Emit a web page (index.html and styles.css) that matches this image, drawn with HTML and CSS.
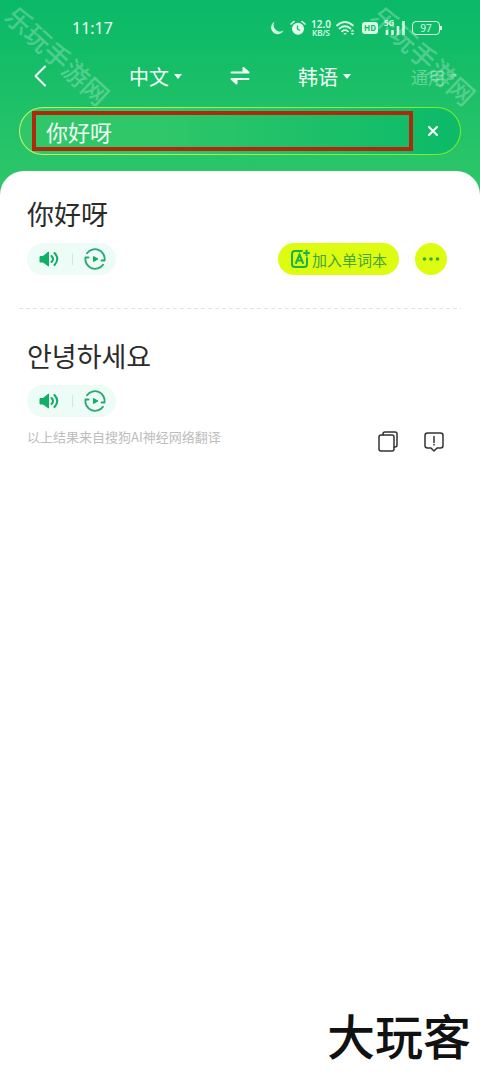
FILE: index.html
```html
<!DOCTYPE html>
<html lang="zh-CN">
<head>
<meta charset="utf-8">
<meta name="viewport" content="width=device-width, initial-scale=1">
<title>翻译</title>
<link rel="stylesheet" href="styles.css">
</head>
<body>
<svg class="defs" width="0" height="0" aria-hidden="true">
  <symbol id="speaker" viewBox="0 0 22 18">
    <path d="M1 6.500h3L9.500 2v14L4 12H1z" fill="#12ad67" stroke="#12ad67" stroke-width="1" stroke-linejoin="round"/>
    <path d="M12.500 6q3 3 0 6M15.500 3q5.500 6 0 12" fill="none" stroke="#12ad67" stroke-width="2" stroke-linecap="round"/>
  </symbol>
  <symbol id="replay" viewBox="0 0 24 24">
    <path d="M4 6.300A9.700 9.700 0 0 1 21.500 13.500H18.500M20 17.700A9.700 9.700 0 0 1 2.500 10.500H5.500" fill="none" stroke="#2aa873" stroke-width="1.900" stroke-linecap="round" stroke-linejoin="round"/>
    <path d="M10.500 9.500v5l4.500-2.500z" fill="#12ad67" stroke="#12ad67" stroke-linejoin="round"/>
  </symbol>
</svg>
<div class="app">
  <header class="top">
    <span class="mark mark-left">乐玩手游网</span>
    <span class="mark mark-right">乐玩手游网</span>
    <div class="status">
      <time>11:17</time>
      <div class="status-icons">
        <svg width="14" height="14" viewBox="0 0 14 14"><path d="M4.500.8A6.600 6.600 0 1 0 13.600 9.500 6.500 6.500 0 0 1 4.500.8z" fill="#d8fbe6"/></svg>
        <svg width="16" height="16" viewBox="0 0 16 16"><circle cx="8" cy="8.700" r="6" fill="#e4fcee"/><path d="M1 4l3-2.500M15 4l-3-2.500" stroke="#e4fcee" stroke-width="1.600" stroke-linecap="round"/><path d="M7.500 5.500v3.500l2.500 1.500" fill="none" stroke="#14b968" stroke-width="1.300"/></svg>
        <span class="speed"><b>12.0</b><b class="unit">KB/S</b></span>
        <svg width="20" height="16" viewBox="0 0 20 16"><path d="M1 5.500q8-7 16 0M3.500 8.500q5.500-4.500 11 0M6 11.300q3-2.300 6 0" fill="none" stroke="#d8fbe6" stroke-width="1.700" stroke-linecap="round"/><path d="M7.200 13h3.600L9 15zM14.500 11.500l2-2 2 2zM14.500 13l2 2 2-2z" fill="#d8fbe6"/></svg>
        <span class="hd">HD</span>
        <span class="signal"><b>5G</b><svg width="22" height="16" viewBox="0 0 22 16"><path d="M3 10v5M8.500 10v5M14 6v9M19.500 1v14" stroke="#d8fbe6" stroke-width="2.500"/></svg></span>
        <span class="battery">97</span>
      </div>
    </div>
    <nav class="langs">
      <button class="back" aria-label="返回"><svg width="14" height="22" viewBox="0 0 14 22"><path d="M12 1.500L2.500 11l9.500 9.500" fill="none" stroke="#fff" stroke-width="2" stroke-linecap="round" stroke-linejoin="round"/></svg></button>
      <button class="lang">中文<i class="caret"></i></button>
      <button class="swap" aria-label="交换语言"><svg width="20" height="18" viewBox="0 0 20 18"><path d="M1.500 5.500h17L13.500 1v4M18.500 12h-17l5 4.500V12" fill="#f2fff7" stroke="#f2fff7" stroke-width="2" stroke-linecap="round" stroke-linejoin="round"/></svg></button>
      <button class="lang">韩语<i class="caret"></i></button>
      <button class="domain">通用<i class="caret"></i></button>
    </nav>
    <form class="search">
      <input type="text" value="你好呀" aria-label="翻译内容">
      <button type="button" class="clear" aria-label="清除"><svg width="12" height="12" viewBox="0 0 12 12"><path d="M2 2l8 8M10 2l-8 8" stroke="#fff" stroke-width="2" stroke-linecap="round"/></svg></button>
    </form>
  </header>
  <main class="panel">
    <section class="entry source">
      <h2>你好呀</h2>
      <div class="row">
        <div class="audio">
          <button aria-label="朗读"><svg width="22" height="18"><use href="#speaker"/></svg></button>
          <i class="bar"></i>
          <button aria-label="跟读"><svg width="24" height="24"><use href="#replay"/></svg></button>
        </div>
        <div class="actions">
          <button class="add"><svg width="20" height="20" viewBox="0 0 20 20"><path d="M12 2H5Q2 2 2 5v10q0 3 3 3h9q3 0 3-3V9" fill="none" stroke="#16b44c" stroke-width="2" stroke-linecap="round"/><path d="M6 14l3.500-8.500L13 14M7.500 11.500h4M14 4h5M16.500 1.500v5" fill="none" stroke="#16b44c" stroke-width="2" stroke-linecap="round"/></svg>加入单词本</button>
          <button class="more" aria-label="更多"><svg width="18" height="4" viewBox="0 0 18 4"><circle cx="2.500" cy="2" r="1.800"/><circle cx="9" cy="2" r="1.800"/><circle cx="15.500" cy="2" r="1.800"/></svg></button>
        </div>
      </div>
    </section>
    <hr>
    <section class="entry">
      <h2 lang="ko">안녕하세요</h2>
      <div class="row">
        <div class="audio">
          <button aria-label="朗读"><svg width="22" height="18"><use href="#speaker"/></svg></button>
          <i class="bar"></i>
          <button aria-label="跟读"><svg width="24" height="24"><use href="#replay"/></svg></button>
        </div>
      </div>
      <div class="foot">
        <p>以上结果来自搜狗AI神经网络翻译</p>
        <div class="tools">
          <button aria-label="复制"><svg width="20" height="22" viewBox="0 0 20 22"><path d="M5 4V3q0-2 2-2h10q2 0 2 2v11q0 2-2 2h-1" /><rect x="1" y="4" width="15" height="16" rx="2"/></svg></button>
          <button aria-label="反馈"><svg width="20" height="22" viewBox="0 0 20 22"><path d="M3.500 2h13q2.500 0 2.500 2.500v10q0 2.500-2.500 2.500H13l-3 3-3-3H3.500Q1 17 1 14.500v-10Q1 2 3.500 2zM10 5.500v6M10 13.500v.5"/></svg></button>
        </div>
      </div>
    </section>
    <footer class="brand">大玩客</footer>
  </main>
</div>
</body>
</html>
```
FILE: styles.css
```css
* { box-sizing: border-box; }

body {
  margin: 0;
  font-family: "Noto Sans CJK SC", "Noto Sans", sans-serif;
  color: #2b2b2b;
  background: #fff;
}

button {
  display: flex;
  align-items: center;
  justify-content: center;
  padding: 0;
  border: 0;
  background: none;
  color: inherit;
  font: inherit;
}

svg { display: block; flex: none; }
.defs { position: absolute; }

.app {
  display: flex;
  flex-direction: column;
  min-height: 100vh;
}

.top {
  position: relative;
  overflow: hidden;
  padding: 16px 19px 40px;
  background: linear-gradient(#09b967, #30c769);
  color: #f2fff7;
}

.mark {
  position: absolute;
  top: 41px;
  font-size: 26px;
  line-height: 28px;
  font-weight: 500;
  white-space: nowrap;
  color: rgba(255, 255, 255, 0.26);
  transform: rotate(43deg);
  pointer-events: none;
}
.mark-left { left: -7px; }
.mark-right { right: -9px; }

.status {
  display: flex;
  align-items: center;
  justify-content: space-between;
  height: 24px;
  padding: 0 21px 0 53px;
  font-size: 16px;
  font-family: "Noto Sans", sans-serif;
}

.status-icons {
  display: flex;
  align-items: center;
  gap: 6px;
  color: #d8fbe6;
}

.speed {
  display: flex;
  flex-direction: column;
  align-items: center;
  width: 22px;
  margin: 0 -2px;
  font-size: 10px;
  line-height: 10px;
}
.speed .unit { font-size: 8px; line-height: 8px; }
.speed b { font-weight: 600; }

.hd {
  padding: 0 2px;
  border-radius: 3px;
  background: #d8fbe6;
  color: #14b968;
  font-size: 8px;
  line-height: 12px;
  font-weight: 700;
}

.signal { position: relative; }
.signal b {
  position: absolute;
  top: -2px;
  left: 0;
  font-size: 8px;
  line-height: 10px;
}

.battery {
  position: relative;
  width: 28px;
  border: 1px solid #d8fbe6;
  border-radius: 4px;
  font-size: 10px;
  line-height: 12px;
  text-align: center;
}
.battery::after {
  content: "";
  position: absolute;
  top: 4px;
  right: -3px;
  width: 2px;
  height: 4px;
  background: #d8fbe6;
}

.langs {
  display: grid;
  grid-template-columns: 76px 1fr 48px 1fr 76px;
  align-items: center;
  height: 32px;
  margin: 20px 0 15px;
  font-size: 20px;
}
.back { justify-self: start; padding-left: 14px; }
.lang { gap: 5px; }
.caret {
  border: 4px solid transparent;
  border-top: 5px solid currentColor;
  border-bottom: 0;
}
.domain {
  justify-self: end;
  gap: 4px;
  padding-right: 4px;
  font-size: 17px;
  color: rgba(255, 255, 255, 0.35);
  white-space: nowrap;
}

.search {
  display: flex;
  align-items: center;
  height: 48px;
  padding: 0 0 0 12px;
  border: 1px solid transparent;
  border-radius: 24px;
  background:
    linear-gradient(90deg, #30c769 30%, #0cba68) padding-box,
    linear-gradient(90deg, #c8f26a, #74ee2c) border-box;
}
.search input {
  flex: 1;
  min-width: 0;
  height: 40px;
  padding: 0 10px;
  border: 4px solid #ad2a0c;
  outline: 0;
  background: none;
  color: #f2fff7;
  font: inherit;
  font-size: 22px;
}
.clear { width: 39px; margin-right: 8px; height: 40px; }

.panel {
  position: relative;
  display: flex;
  flex: 1;
  flex-direction: column;
  margin-top: -24px;
  padding: 23px 19px 12px;
  border-radius: 24px 24px 0 0;
  background: #fff;
}

.entry { padding: 0 14px 0 8px; }
.source { margin-bottom: 33px; }

h2 {
  margin: 0 0 10px;
  font-size: 27px;
  line-height: 39px;
  font-weight: 400;
}
h2:lang(ko) { font-family: "Noto Sans CJK KR", sans-serif; }

.row {
  display: flex;
  align-items: center;
  justify-content: space-between;
}

.audio {
  display: flex;
  align-items: center;
  justify-content: space-between;
  height: 32px;
  padding: 0 9px 0 12px;
  border-radius: 16px;
  background: #edfcf6;
  width: 89px;
}
.bar { width: 1px; height: 12px; background: #cfe9de; }

.actions { display: flex; gap: 16px; }
.add {
  gap: 2px;
  height: 32px;
  padding: 0 12px;
  border-radius: 16px;
  background: #ddfc12;
  color: #42a832;
  font-size: 15px;
}
.more {
  width: 32px;
  height: 32px;
  border-radius: 50%;
  background: #ddfc12;
}
.more svg { fill: #38a838; }

hr {
  width: 100%;
  height: 1px;
  margin: 0 0 27px;
  border: 0;
  background: repeating-linear-gradient(90deg, #e2e2e2 0 4px, transparent 4px 7px);
}

.foot {
  display: flex;
  align-items: flex-start;
  justify-content: space-between;
  padding-top: 10px;
}
.foot p {
  margin: 0;
  font-size: 13px;
  line-height: 20px;
  color: #bdbdbd;
}
.tools { display: flex; gap: 26px; padding: 4px 3px 0 0; }
.tools svg { fill: none; stroke: #333; stroke-width: 1.500; stroke-linecap: round; stroke-linejoin: round; }

.brand {
  align-self: flex-end;
  margin-top: auto;
  margin-right: -10px;
  font-size: 48px;
  line-height: 52px;
  font-weight: 500;
  color: #111;
}
```
